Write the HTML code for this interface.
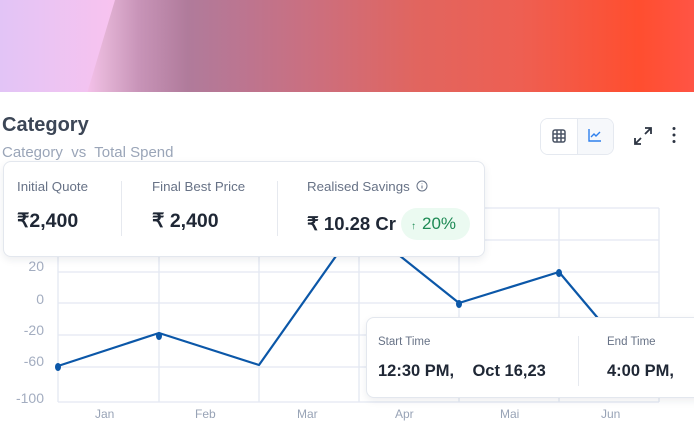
<!DOCTYPE html>
<html><head><meta charset="utf-8"><style>
*{margin:0;padding:0;box-sizing:border-box}
body{width:694px;height:432px;overflow:hidden;background:#fff;font-family:"Liberation Sans",sans-serif;position:relative}
.hero{position:absolute;left:0;top:0;width:694px;height:92px;background:linear-gradient(90deg,#e2c4f6 0%,#f8c3ef 12%,#e4b4d6 15%,#c894b8 20%,#b07b9b 27%,#bc7590 35%,#cb6f7f 45%,#e1655f 60%,#ee5f52 75%,#ff4e2f 92%,#ff5445 100%)}
.hero:before{content:"";position:absolute;left:0;top:0;width:115px;height:92px;background:linear-gradient(90deg,#e2c4f6,#f8c3ef);clip-path:polygon(0 0,100% 0,76% 100%,0 100%)}
.t{position:absolute;left:2px;top:114px;font-size:20px;font-weight:bold;color:#3c4656}
.st{position:absolute;left:2px;top:144px;font-size:15px;color:#9aa5b8}
.tog{position:absolute;left:540px;top:118px;width:74px;height:37px;border:1px solid #e5e9f0;border-radius:8px;overflow:hidden}
.tog div{position:absolute;top:0;height:35px}
.card{position:absolute;background:#fff;border:1px solid #e3e7ee;border-radius:8px;box-shadow:0 3px 8px rgba(30,40,70,.08)}
.lbl{position:absolute;font-size:13.3px;color:#677286}
.val{position:absolute;font-size:19.5px;font-weight:bold;color:#1f2735}
.sep{position:absolute;width:1px;background:#e6e9ef}
.yl{position:absolute;font-size:14px;color:#a3adc0;text-align:right;width:44px;left:0}
.xl{position:absolute;font-size:12px;color:#98a3b6;top:407px}
</style></head><body>
<div class="hero"></div>
<div class="t">Category</div>
<div class="st">Category&nbsp; vs&nbsp; Total Spend</div>
<div class="tog"><div style="left:0;width:36px;background:#fff"></div><div style="left:36px;width:38px;background:#f6f8fb;border-left:1px solid #e5e9f0"></div>
<svg style="position:absolute;left:11px;top:10px" width="14" height="14" viewBox="0 0 14 14" fill="none" stroke="#4a5465" stroke-width="1.5"><rect x="1" y="1" width="12" height="12" rx="2"/><path d="M1 5h12M1 9h12M5 1v12M9 1v12"/></svg>
<svg style="position:absolute;left:47px;top:9px" width="14" height="14" viewBox="0 0 14 14" fill="none" stroke="#2f80ed" stroke-width="1.4"><path d="M1 1v12h12M3 9l3-3 2 2 4-4"/></svg>
</div>
<svg style="position:absolute;left:633px;top:126px" width="20" height="20" viewBox="0 0 20 20" fill="none" stroke="#2c3442" stroke-width="1.8"><path d="M12 2h6v6M18 2l-6 6M8 18H2v-6M2 18l6-6"/></svg>
<svg style="position:absolute;left:671px;top:126px" width="6" height="18"><circle cx="3" cy="2.5" r="1.5" fill="#2c3442"/><circle cx="3" cy="9" r="1.5" fill="#2c3442"/><circle cx="3" cy="15.5" r="1.5" fill="#2c3442"/></svg>

<svg style="position:absolute;left:0;top:0" width="694" height="432">
<g stroke="#e3e8f2" stroke-width="1.3">
<path d="M58 208H659M58 240H659M58 272H659M58 303H659M58 335H659M58 367H659M58 402H659"/>
<path d="M58 208V402M159 208V402M259 208V402M359 208V402M459 208V402M559 208V402M659 208V402"/>
</g>
<polyline points="58,366 159,333 259,365 353,232 370,232 459,303 559,272 650,380" fill="none" stroke="#0b57a8" stroke-width="2.2" stroke-linejoin="round"/>
<g fill="#0b57a8"><ellipse cx="58" cy="367" rx="3" ry="4"/><ellipse cx="159" cy="336" rx="3" ry="4"/><ellipse cx="459" cy="304" rx="3" ry="4"/><ellipse cx="559" cy="273" rx="3" ry="4"/></g>
</svg>
<div class="yl" style="top:258px">20</div>
<div class="yl" style="top:291px">0</div>
<div class="yl" style="top:322px">-20</div>
<div class="yl" style="top:353px">-60</div>
<div class="yl" style="top:390px">-100</div>
<div class="xl" style="left:95px">Jan</div>
<div class="xl" style="left:195px">Feb</div>
<div class="xl" style="left:297px">Mar</div>
<div class="xl" style="left:395px">Apr</div>
<div class="xl" style="left:500px">Mai</div>
<div class="xl" style="left:601px">Jun</div>

<div class="card" style="left:3px;top:161px;width:482px;height:96px">
<div class="lbl" style="left:13px;top:17px">Initial Quote</div>
<div class="val" style="left:13px;top:47px">₹2,400</div>
<div class="sep" style="left:117px;top:19px;height:55px"></div>
<div class="lbl" style="left:148px;top:17px">Final Best Price</div>
<div class="val" style="left:148px;top:47px">₹ 2,400</div>
<div class="sep" style="left:273px;top:19px;height:55px"></div>
<div class="lbl" style="left:303px;top:17px">Realised Savings</div>
<svg style="position:absolute;left:412px;top:18px" width="12" height="12" viewBox="0 0 12 12" fill="none" stroke="#677286" stroke-width="1"><circle cx="6" cy="6" r="5"/><path d="M6 5.5v3M6 3.5v.6"/></svg>
<div class="val" style="left:303px;top:51px;font-size:18.5px">₹ 10.28 Cr</div>
<div style="position:absolute;left:397px;top:46px;width:69px;height:32px;border-radius:16px;background:#ebfaf1;color:#1e8a55;font-size:17px;line-height:32px"><span style="font-size:10px;margin-left:10px;margin-right:6px">↑</span>20%</div>
</div>

<div class="card" style="left:366px;top:317px;width:340px;height:81px">
<div class="lbl" style="left:11px;top:18px;font-size:11.5px">Start Time</div>
<div class="val" style="left:11px;top:44px;font-size:16.5px">12:30 PM,&nbsp;&nbsp;&nbsp; Oct 16,23</div>
<div class="sep" style="left:211px;top:18px;height:50px"></div>
<div class="lbl" style="left:240px;top:18px;font-size:11.5px">End Time</div>
<div class="val" style="left:240px;top:44px;font-size:16.5px">4:00 PM,</div>
</div>
</body></html>
